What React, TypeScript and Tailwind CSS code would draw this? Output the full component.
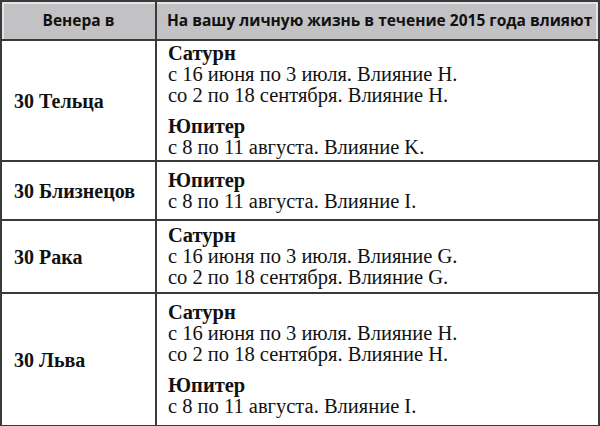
import React from 'react';

const serif = { fontFamily: '"Liberation Serif", "DejaVu Serif", serif' };
const sans = { fontFamily: '"Open Sans", "Noto Sans", sans-serif' };

interface Entry {
  planet: string;
  lines: string[];
}

interface Row {
  sign: string;
  height: string;
  entries: Entry[];
}

const rows: Row[] = [
  {
    sign: '30 Тельца',
    height: 'h-[121px]',
    entries: [
      { planet: 'Сатурн', lines: ['с 16 июня по 3 июля. Влияние H.', 'со 2 по 18 сентября. Влияние H.'] },
      { planet: 'Юпитер', lines: ['с 8 по 11 августа. Влияние K.'] },
    ],
  },
  {
    sign: '30 Близнецов',
    height: 'h-[59px]',
    entries: [{ planet: 'Юпитер', lines: ['с 8 по 11 августа. Влияние I.'] }],
  },
  {
    sign: '30 Рака',
    height: 'h-[73px]',
    entries: [
      { planet: 'Сатурн', lines: ['с 16 июня по 3 июля. Влияние G.', 'со 2 по 18 сентября. Влияние G.'] },
    ],
  },
  {
    sign: '30 Льва',
    height: 'h-[133px]',
    entries: [
      { planet: 'Сатурн', lines: ['с 16 июня по 3 июля. Влияние H.', 'со 2 по 18 сентября. Влияние H.'] },
      { planet: 'Юпитер', lines: ['с 8 по 11 августа. Влияние I.'] },
    ],
  },
];

export default function App() {
  return (
    <div className="w-[600px] h-[426px] bg-white">
      <table className="w-[600px] table-fixed border-collapse border-2 border-[#3a3a3a] text-[#111]">
        <thead>
          <tr className="h-[39px]">
            <th
              style={sans}
              className="w-[155px] border-2 border-[#3a3a3a] bg-[#c2c2c4] shadow-[inset_2px_2px_0_#e4e4e6] text-[15.5px] font-bold text-center"
            >
              Венера в
            </th>
            <th
              style={sans}
              className="border-2 border-[#3a3a3a] bg-[#c2c2c4] shadow-[inset_0_2px_0_#e4e4e6,inset_-2px_0_0_#e4e4e6] text-[15.5px] font-bold text-left pl-[10px] whitespace-nowrap"
            >
              На вашу личную жизнь в течение 2015 года влияют
            </th>
          </tr>
        </thead>
        <tbody>
          {rows.map((row) => (
            <tr key={row.sign} className={row.height}>
              <td
                style={serif}
                className="border-2 border-[#3a3a3a] pl-[12px] text-[20px] font-bold align-middle"
              >
                {row.sign}
              </td>
              <td style={serif} className="border-2 border-[#3a3a3a] pl-[11px] align-middle">
                <div className="flex flex-col gap-[10px] text-[20.5px] leading-[21px]">
                  {row.entries.map((entry, i) => (
                    <div key={i}>
                      <div className="font-bold">{entry.planet}</div>
                      {entry.lines.map((line) => (
                        <div key={line}>{line}</div>
                      ))}
                    </div>
                  ))}
                </div>
              </td>
            </tr>
          ))}
        </tbody>
      </table>
    </div>
  );
}
